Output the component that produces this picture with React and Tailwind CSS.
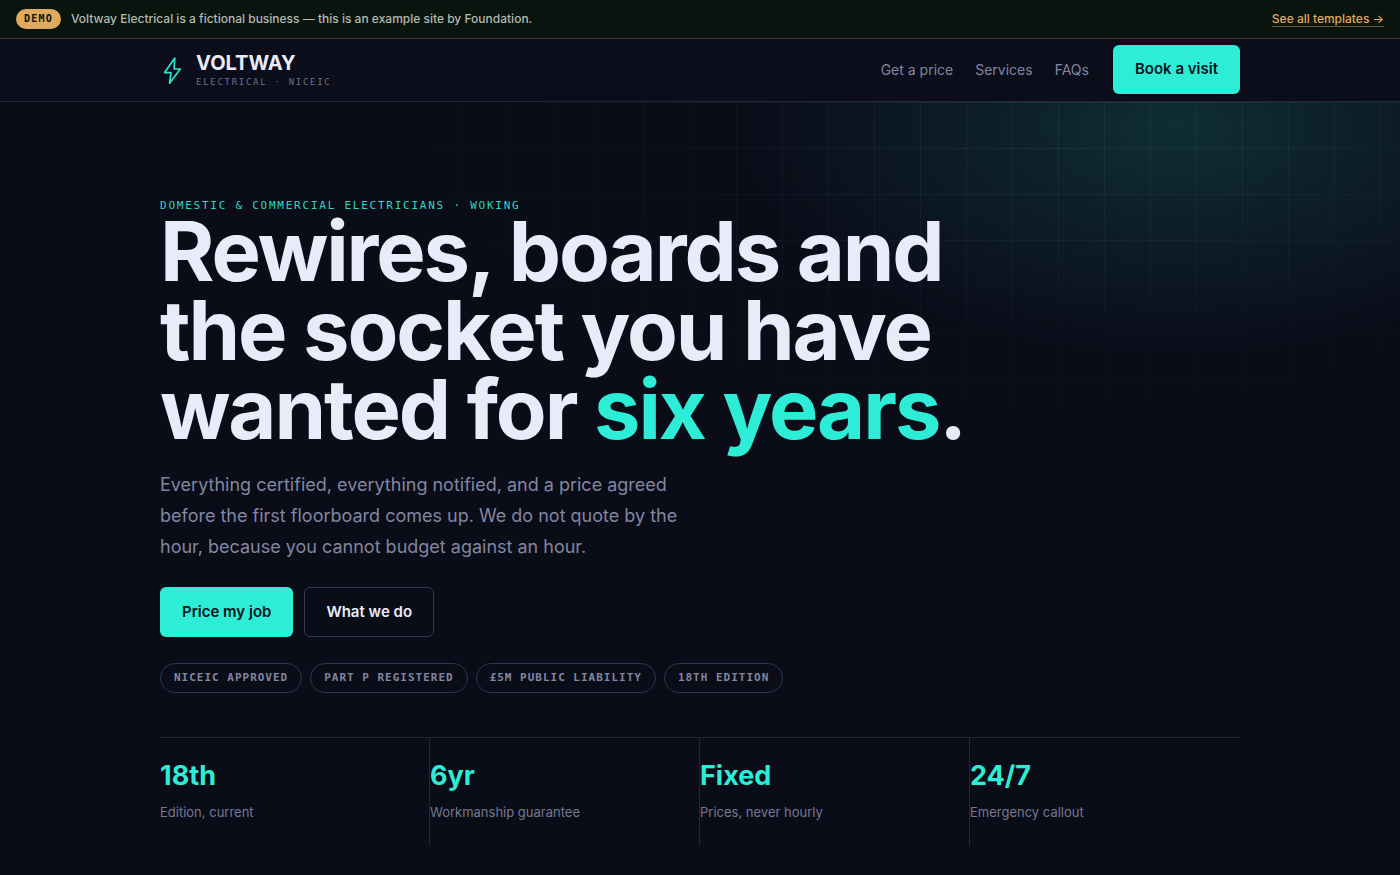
const navLinks = [
  { label: "Get a price", href: "#price" },
  { label: "Services", href: "#services" },
  { label: "FAQs", href: "#faqs" },
];

const badges = [
  "NICEIC APPROVED",
  "PART P REGISTERED",
  "£5M PUBLIC LIABILITY",
  "18TH EDITION",
];

const stats = [
  { value: "18th", label: "Edition, current" },
  { value: "6yr", label: "Workmanship guarantee" },
  { value: "Fixed", label: "Prices, never hourly" },
  { value: "24/7", label: "Emergency callout" },
];

function BoltIcon() {
  return (
    <svg
      width="24"
      height="28"
      viewBox="0 0 24 28"
      fill="none"
      stroke="#2fe3c8"
      strokeWidth="1.7"
      strokeLinejoin="round"
      aria-hidden="true"
    >
      <path d="M14.8 2 4.6 16.6h6.4l-1.4 10.6L20.3 13h-6.2z" />
    </svg>
  );
}

function DemoBanner() {
  return (
    <div className="flex items-center justify-between border-b border-[#403f32] bg-[#08140d] px-4 py-[9px]">
      <div className="flex items-center gap-2.5">
        <span className="rounded-full bg-[#e0a95e] px-2 py-0.5 font-['DejaVu_Sans_Mono',monospace] text-[10px] leading-4 font-bold tracking-[0.12em] text-[#08140d]">
          DEMO
        </span>
        <p className="text-xs leading-4 font-medium text-[#b4b9b2]">
          Voltway Electrical is a fictional business — this is an example site
          by Foundation.
        </p>
      </div>
      <a
        href="#templates"
        className="border-b border-[#6b5634] text-xs leading-3.5 font-medium text-[#e0a95e]"
      >
        See all templates →
      </a>
    </div>
  );
}

function Header() {
  return (
    <header className="border-b border-[#222838] bg-[#0b0d1a]">
      <div className="mx-auto flex max-w-[1080px] items-center justify-between pt-1.5 pb-[7px]">
        <a href="#top" className="flex items-center gap-3">
          <BoltIcon />
          <span className="flex flex-col">
            <span className="text-xl leading-6 font-bold text-[#e9ebf8]">
              VOLTWAY
            </span>
            <span className="font-['DejaVu_Sans_Mono',monospace] text-[9px] leading-3.5 tracking-[0.19em] text-[#6d7188]">
              ELECTRICAL · NICEIC
            </span>
          </span>
        </a>
        <nav className="flex items-center gap-6">
          <div className="flex gap-[22px]">
            {navLinks.map((link) => (
              <a
                key={link.label}
                href={link.href}
                className="text-sm text-[#8286a0]"
              >
                {link.label}
              </a>
            ))}
          </div>
          <button className="h-[49px] rounded-md bg-[#2dedd7] px-[22px] text-[15px] font-semibold text-[#06141a]">
            Book a visit
          </button>
        </nav>
      </div>
    </header>
  );
}

function Hero() {
  return (
    <section className="relative flex-1 overflow-hidden">
      {/* teal glow and the faded circuit grid */}
      <div className="absolute inset-0 bg-[radial-gradient(ellipse_440px_230px_at_84%_24px,rgba(45,237,215,0.15),transparent)]" />
      <div className="absolute inset-0 bg-[linear-gradient(rgba(150,180,220,0.09)_1px,transparent_1px),linear-gradient(90deg,rgba(150,180,220,0.09)_1px,transparent_1px)] mask-[radial-gradient(ellipse_690px_340px_at_74%_0%,black,transparent)] bg-[size:46px_46px]" />

      <div className="relative mx-auto max-w-[1080px] pt-[98px]">
        <p className="font-['DejaVu_Sans_Mono',monospace] text-[11px] leading-3 tracking-[0.16em] text-[#2dd9c0]">
          DOMESTIC &amp; COMMERCIAL ELECTRICIANS · WOKING
        </p>
        <h1 className="text-[83px] leading-[79px] font-bold tracking-tight text-[#e9ebf8]">
          Rewires, boards and
          <br />
          the socket you have
          <br />
          wanted for <span className="text-[#2dedd7]">six years</span>.
        </h1>
        <p className="mt-5 max-w-[540px] text-lg leading-[31px] text-[#8286a0]">
          Everything certified, everything notified, and a price agreed before
          the first floorboard comes up. We do not quote by the hour, because
          you cannot budget against an hour.
        </p>
        <div className="mt-[25px] flex gap-[11px]">
          <button className="h-[50px] rounded-md bg-[#2dedd7] px-[22px] text-[15px] font-semibold text-[#06141a]">
            Price my job
          </button>
          <button className="h-[50px] rounded-md border border-[#353851] px-[21px] text-[15px] font-semibold text-[#e9ebf8]">
            What we do
          </button>
        </div>
        <ul className="mt-[26px] flex gap-2">
          {badges.map((badge) => (
            <li
              key={badge}
              className="rounded-full border border-[#303450] px-[13px] py-1.5 font-['DejaVu_Sans_Mono',monospace] text-[11px] leading-4 font-bold tracking-[0.09em] text-[#8286a0]"
            >
              {badge}
            </li>
          ))}
        </ul>
        <dl className="mt-11 grid grid-cols-4 border-t border-[#222636]">
          {stats.map((stat) => (
            <div
              key={stat.label}
              className="flex flex-col-reverse gap-2.5 border-r border-[#222636] pt-[22px] pb-6 last:border-r-0"
            >
              <dt className="text-[13px] leading-5 text-[#757991]">
                {stat.label}
              </dt>
              <dd className="text-[27px] leading-8 font-bold text-[#2dedd7]">
                {stat.value}
              </dd>
            </div>
          ))}
        </dl>
      </div>
    </section>
  );
}

function App() {
  return (
    <div
      id="top"
      className="flex min-h-screen flex-col bg-[#0a0c18] font-[Inter,sans-serif]"
    >
      <DemoBanner />
      <Header />
      <Hero />
    </div>
  );
}

export default App;
